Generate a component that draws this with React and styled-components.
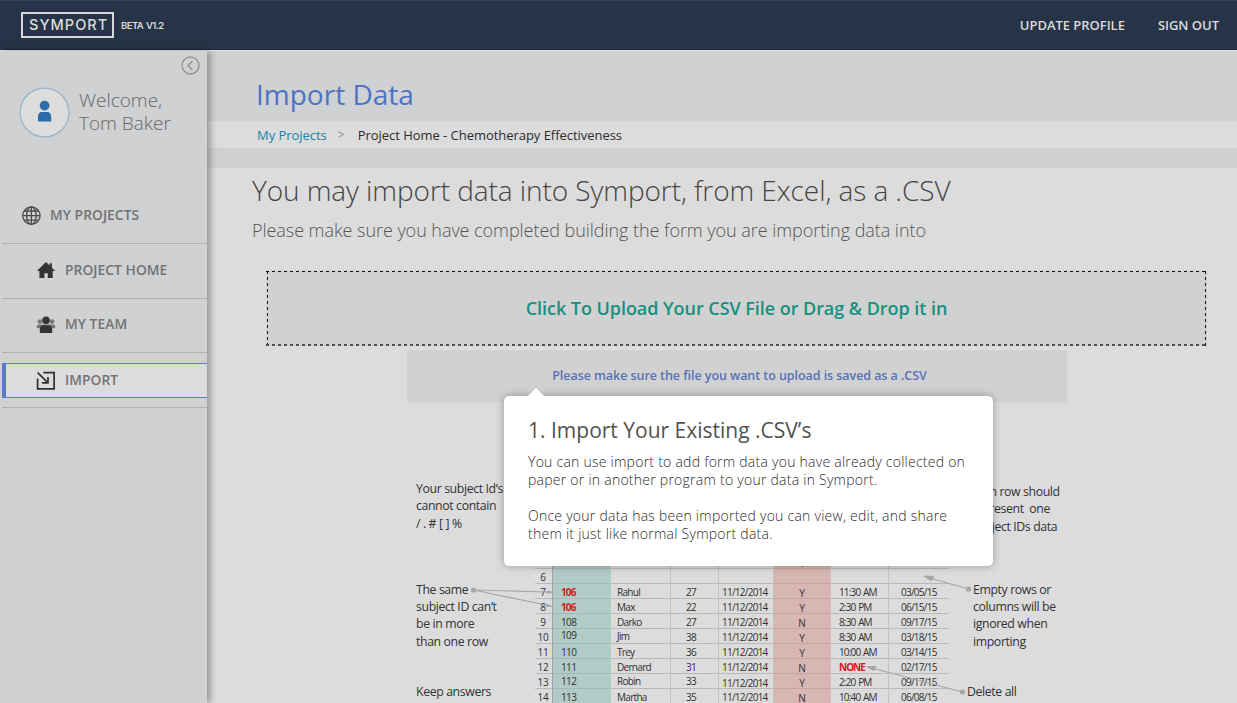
import React from "react";
import styled, { createGlobalStyle } from "styled-components";

const GlobalStyle = createGlobalStyle`
  * { box-sizing: border-box; }
  html, body { margin: 0; padding: 0; overflow: hidden; }
  body { font-family: "Open Sans", "Noto Sans", sans-serif; background: #dcdcdc; color: #3d3d3d; }
  h1, h2, h3, p { margin: 0; font-weight: 400; }
`;

const Page = styled.div`
  position: relative;
  display: flex;
  flex-direction: column;
  width: 1237px;
  height: 703px;
  overflow: hidden;
`;

const TopBar = styled.header`
  flex: none;
  display: flex;
  align-items: center;
  height: 51px;
  padding: 0 18px 2px 21px;
  background: #273447;
  border-top: 1px solid #354356;
  border-bottom: 1px solid #e4e6e7;
  box-shadow: inset 0 -1px 0 #1c2a3e;
  color: #dadbdc;
`;

const Logo = styled.div`
  width: 93px;
  height: 26px;
  border: 2px solid #d6d8da;
  line-height: 22px;
  padding-left: 6px;
  font-family: Inter, "Open Sans", sans-serif;
  font-size: 14.5px;
  font-weight: 500;
  letter-spacing: 1.05px;
  white-space: nowrap;
`;

const Version = styled.span`
  margin-left: 7px;
  padding-top: 1px;
  font-family: Inter, "Open Sans", sans-serif;
  font-size: 9.5px;
  font-weight: 600;
  letter-spacing: -0.55px;
  word-spacing: 1px;
`;

const TopLinks = styled.nav`
  margin-left: auto;
  display: flex;
  gap: 33px;
  font-size: 13px;
  font-weight: 600;
  letter-spacing: -0.03px;
`;

const Body = styled.div`
  flex: 1;
  display: flex;
  min-height: 0;
`;

const Sidebar = styled.aside`
  position: relative;
  z-index: 1;
  flex: none;
  width: 207px;
  background: #cfd1d2;
  box-shadow: 3px 0 7px rgba(0, 0, 0, 0.34);
`;

const CollapseRow = styled.div`
  display: flex;
  justify-content: flex-end;
  padding: 5px 7px 0 0;
  height: 36px;
`;

const Profile = styled.div`
  display: flex;
  align-items: center;
  height: 51px;
  padding-left: 19px;
  gap: 9px;
`;

const Welcome = styled.div`
  margin-top: -1px;
  font-size: 19px;
  font-weight: 300;
  line-height: 23px;
  color: #66686a;
`;

const Menu = styled.nav`
  margin: 51px 0 0 2px;
`;

const MenuItem = styled.div`
  display: flex;
  align-items: center;
  height: ${(p) => p.$h || 55}px;
  padding-left: ${(p) => (p.$nested ? 34 : 19)}px;
  padding-bottom: 4px;
  gap: 9px;
  border-bottom: 1px solid #aeb0b2;
  font-size: 13.8px;
  font-weight: 600;
  letter-spacing: 0.05px;
  color: #727374;
  svg { flex: none; margin-top: 2px; }
`;

const ActiveSlot = styled.div`
  height: 55px;
  padding: 10px 0;
  border-bottom: 1px solid #aeb0b2;
`;

const ActiveItem = styled(MenuItem)`
  height: 35px;
  padding: 0 0 2px 30px;
  background: #dcdcdc;
  border-top: 1px solid #5682d6;
  border-bottom: 1px solid #5682d6;
  border-left: 4px solid #5a7cc4;
`;

const Main = styled.main`
  flex: 1;
  min-width: 0;
  display: flex;
  flex-direction: column;
`;

const TitleBand = styled.div`
  flex: none;
  height: 70px;
  padding: 24px 0 0 49px;
  background: #cfd1d2;
`;

const PageTitle = styled.h1`
  font-size: 28px;
  line-height: 38px;
  font-weight: 400;
  color: #4d73c6;
`;

const Breadcrumb = styled.div`
  flex: none;
  display: flex;
  align-items: center;
  height: 27px;
  padding-left: 50px;
  background: #dcdcdc;
  font-size: 13px;
  letter-spacing: -0.04px;
  color: #2c2c2c;
`;

const Crumb = styled.a`
  color: #1484ad;
`;

const Separator = styled.span`
  width: 31px;
  padding-left: 11px;
  font-size: 12px;
  color: #909192;
`;

const Divider = styled.div`
  flex: none;
  height: 20px;
  background: #cfd1d2;
`;

const Content = styled.section`
  flex: 1;
  display: flex;
  flex-direction: column;
  padding: 3px 30px 0 45px;
  background: #dcdcdc;
`;

const Headline = styled.h2`
  font-size: 28px;
  line-height: 38px;
  font-weight: 300;
  letter-spacing: -0.08px;
  color: #454545;
`;

const Subline = styled.p`
  font-size: 18px;
  line-height: 24px;
  margin-top: 9px;
  font-weight: 300;
  letter-spacing: -0.05px;
  color: #565656;
`;

const DropZone = styled.div`
  flex: none;
  display: flex;
  align-items: center;
  justify-content: center;
  height: 76px;
  margin: 28px 0 0 14px;
  background:
    repeating-linear-gradient(90deg, #151515 0 3px, transparent 3px 6px) 0 1px / 100% 1px no-repeat,
    repeating-linear-gradient(90deg, #505050 0 3px, transparent 3px 6px) 0 100% / 100% 2px no-repeat,
    repeating-linear-gradient(180deg, #151515 0 3px, transparent 3px 6px) 1px 1px / 1px 100% no-repeat,
    repeating-linear-gradient(180deg, #151515 0 3px, transparent 3px 6px) calc(100% - 1px) 1px / 1px 100% no-repeat,
    #d1d1d1;
  font-size: 18px;
  font-weight: 600;
  letter-spacing: -0.05px;
  color: #159080;
`;

const Notice = styled.div`
  flex: none;
  align-self: flex-start;
  width: 660px;
  height: 52px;
  margin: 4px 0 0 155px;
  padding-left: 5px;
  line-height: 52px;
  text-align: center;
  background: #d1d1d2;
  font-size: 12.5px;
  font-weight: 650;
  letter-spacing: -0.06px;
  color: #5672b6;
  box-shadow: 0 1px 0 #d7d7da;
`;

const Guide = styled.div`
  position: relative;
  flex: none;
  display: flex;
  height: 301px;
  margin-left: 164px;
`;

const Notes = styled.div`
  flex: none;
  width: ${(p) => p.$w}px;
  font-size: 12.3px;
  line-height: 17.3px;
  letter-spacing: -0.38px;
  color: #333;
  white-space: pre;
`;

const Note = styled.p`
  margin-top: ${(p) => p.$gap}px;
  margin-left: ${(p) => p.$indent || 0}px;
`;

const Sheet = styled.div`
  flex: none;
  width: 414px;
  margin-right: 24px;
  padding-top: 152px;
`;

const SheetRow = styled.div`
  display: grid;
  grid-template-columns: 18px 58px 60px 48px 55px 57px 58px 60px;
  grid-template-rows: 15px;
  height: 15px;
  font-size: 10px;
  line-height: 17px;
  color: #303030;
`;

const tints = { teal: "#b2cbc7", pink: "#d8b6b3" };
const rules = { teal: "#a3b9b5", pink: "#c4a6a4" };

const Cell = styled.div`
  padding-left: ${(p) => p.$pad}px;
  letter-spacing: ${(p) => p.$track || 0}px;
  word-spacing: 1px;
  background: ${(p) => tints[p.$tint] || "transparent"};
  border-right: ${(p) => (p.$last ? "0" : "1px")} solid
    ${(p) => (p.$tint ? "transparent" : "#c2c2c2")};
  box-shadow: inset 0 -1px 0 ${(p) => rules[p.$tint] || "#b9b9b9"};
  font-weight: ${(p) => (p.$alert ? 700 : 400)};
  color: ${(p) => (p.$alert ? "#cf1b1b" : "inherit")};
  text-align: ${(p) => (p.$center ? "center" : "left")};
  white-space: nowrap;
`;

const RowNumber = styled(Cell)`
  padding-right: 1px;
  border-right-color: #9fa3a3;
`;

const Nudge = styled.span`
  display: inline-block;
  transform: translateY(${(p) => p.$y}px);
`;

const Arrows = styled.svg`
  position: absolute;
  left: 0;
  top: 0;
`;

const Popover = styled.div`
  position: absolute;
  z-index: 2;
  left: 504px;
  top: 396px;
  width: 489px;
  height: 170px;
  padding: 20px 24px;
  background: #fff;
  border-radius: 5px;
  box-shadow: 0 0 9px rgba(0, 0, 0, 0.3);
  color: #4a4a4a;
  &::before {
    content: "";
    position: absolute;
    left: 24px;
    top: -8px;
    border: solid transparent;
    border-width: 0 8px 8px;
    border-bottom-color: #fff;
  }
`;

const PopTitle = styled.h3`
  font-size: 21px;
  line-height: 29px;
  font-weight: 400;
  color: #525252;
`;

const PopText = styled.p`
  margin-top: ${(p) => p.$gap}px;
  font-size: 14px;
  line-height: 18px;
  font-weight: 300;
  letter-spacing: 0.25px;
  white-space: nowrap;
  color: #2c2c2c;
`;

const CollapseIcon = () => (
  <svg width="19" height="19" viewBox="0 0 19 19" fill="none" stroke="#929496" strokeWidth="1.4">
    <circle cx="9.5" cy="9.5" r="8.5" />
    <path d="M11.5 5 7 9.5l4.5 4.5" />
  </svg>
);

const Avatar = () => (
  <svg width="51" height="51" viewBox="0 0 51 51">
    <circle cx="25.5" cy="25.5" r="24.4" fill="#dddddd" stroke="#97b5c6" strokeWidth="1.3" />
    <circle cx="25.6" cy="18.6" r="4.9" fill="#2a6da9" />
    <path d="M19 34.5v-4.3q0-5.2 4-5.2h5.2q4 0 4 5.2v4.3z" fill="#2a6da9" />
  </svg>
);

const GlobeIcon = () => (
  <svg width="20" height="20" viewBox="0 0 20 20" fill="none" stroke="#47494a" strokeWidth="1.3">
    <circle cx="10.4" cy="10.6" r="8.7" />
    <ellipse cx="10.4" cy="10.6" rx="4.8" ry="8.7" />
    <path d="M10.4 1.9v17.4M1.7 10.6h17.4M3 6h14.8M3 15.2h14.8" />
  </svg>
);

const HomeIcon = () => (
  <svg width="20" height="20" viewBox="0 0 20 20" fill="#323436">
    <path d="M10 2 0.8 11h2.6v6.9h5v-4.6h3.4v4.6h4.9V11h2.6L15.9 7.7V3.2h-2.3v2.3z" />
  </svg>
);

const TeamIcon = () => (
  <svg width="20" height="20" viewBox="0 0 20 20">
    <g fill="#77797a">
      <circle cx="4" cy="6.6" r="2.4" />
      <circle cx="16" cy="6.6" r="2.4" />
      <path d="M0.8 13.2v-1.6q0-2 2-2h14.4q2 0 2 2v1.6z" />
    </g>
    <circle cx="10" cy="5.4" r="4.2" fill="#323436" stroke="#cfd1d2" strokeWidth="0.5" />
    <path d="M3.8 18v-3.4q0-4.4 4-4.4h4.4q4 0 4 4.4V18z" fill="#323436" />
  </svg>
);

const ImportIcon = () => (
  <svg width="20" height="20" viewBox="0 0 20 20" fill="none" stroke="#2f3133" strokeWidth="1.7">
    <path d="M7.3 1.6h10.8v16.2H1.6V7.4" />
    <path d="M1.6 1.6l10 9.8M12 5.9v6H6" />
  </svg>
);

// idY and dateY are small vertical nudges of the texts in that row.
const rows = [
  { n: "5", ans: "Y" },
  { n: "6" },
  { n: "7", id: "106", name: "Rahul", age: "27", date: "11/12/2014", ans: "Y", time: "11:30 AM", end: "03/05/15", dup: true },
  { n: "8", id: "106", name: "Max", age: "22", date: "11/12/2014", ans: "Y", time: "2:30 PM", end: "06/15/15", dup: true },
  { n: "9", id: "108", name: "Darko", age: "27", date: "11/12/2014", ans: "N", time: "8:30 AM", end: "09/17/15" },
  { n: "10", id: "109", name: "Jim", age: "38", date: "11/12/2014", ans: "Y", time: "8:30 AM", end: "03/18/15", idY: -2 },
  { n: "11", id: "110", name: "Trey", age: "36", date: "11/12/2014", ans: "Y", time: "10:00 AM", end: "03/14/15" },
  { n: "12", id: "111", name: "Dernard", age: "31", date: "11/12/2014", ans: "N", time: "NONE", end: "02/17/15" },
  { n: "13", id: "112", name: "Robin", age: "33", date: "11/12/2014", ans: "Y", time: "2:20 PM", end: "09/17/15", idY: -1, dateY: 1 },
  { n: "14", id: "113", name: "Martha", age: "35", date: "11/12/2014", ans: "N", time: "10:40 AM", end: "06/08/15" },
];

const DataRow = ({ r }) => (
  <SheetRow>
    <RowNumber $pad={0} $center $track={-0.3}>{r.n}</RowNumber>
    <Cell $pad={8} $tint="teal" $alert={r.dup} $track={r.dup ? -0.9 : -0.6}><Nudge $y={r.idY || 0}>{r.id}</Nudge></Cell>
    <Cell $pad={6} $track={-0.7}><Nudge $y={r.idY ? -1 : 0}>{r.name}</Nudge></Cell>
    <Cell $pad={15} $track={-0.6}><Nudge $y={r.dateY ? -1 : 0}>{r.age}</Nudge></Cell>
    <Cell $pad={3} $track={-0.75}><Nudge $y={r.dateY || 0}>{r.date}</Nudge></Cell>
    <Cell $pad={0} $tint="pink" $center><Nudge $y={0.5}>{r.ans}</Nudge></Cell>
    <Cell $pad={8} $track={r.time === "NONE" ? -1 : -0.85} $alert={r.time === "NONE"}>{r.time}</Cell>
    <Cell $pad={12} $track={-0.75} $last>{r.end}</Cell>
  </SheetRow>
);

export default function App() {
  return (
    <Page>
      <GlobalStyle />
      <TopBar>
        <Logo>SYMPORT</Logo>
        <Version>BETA V1.2</Version>
        <TopLinks>
          <span>UPDATE PROFILE</span>
          <span>SIGN OUT</span>
        </TopLinks>
      </TopBar>
      <Body>
        <Sidebar>
          <CollapseRow><CollapseIcon /></CollapseRow>
          <Profile>
            <Avatar />
            <Welcome>Welcome,<br />Tom Baker</Welcome>
          </Profile>
          <Menu>
            <MenuItem><GlobeIcon />MY PROJECTS</MenuItem>
            <MenuItem $nested><HomeIcon />PROJECT HOME</MenuItem>
            <MenuItem $nested $h={54}><TeamIcon />MY TEAM</MenuItem>
            <ActiveSlot>
              <ActiveItem $h={35}><ImportIcon />IMPORT</ActiveItem>
            </ActiveSlot>
          </Menu>
        </Sidebar>
        <Main>
          <TitleBand><PageTitle>Import Data</PageTitle></TitleBand>
          <Breadcrumb>
            <Crumb>My Projects</Crumb>
            <Separator>&gt;</Separator>
            <span>Project Home - Chemotherapy Effectiveness</span>
          </Breadcrumb>
          <Divider />
          <Content>
            <Headline>You may import data into Symport, from Excel, as a .CSV</Headline>
            <Subline>Please make sure you have completed building the form you are importing data into</Subline>
            <DropZone>Click To Upload Your CSV File or Drag &amp; Drop it in</DropZone>
            <Notice>Please make sure the file you want to upload is saved as a .CSV</Notice>
            <Guide>
              <Notes $w={119}>
                <Note $gap={78}>{"Your subject Id’s\ncannot contain\n/ . # [ ] %"}</Note>
                <Note $gap={49}>{"The same\nsubject ID can’t\nbe in more\nthan one row"}</Note>
                <Note $gap={33}>Keep answers</Note>
              </Notes>
              <Sheet>
                {rows.map((r) => <DataRow key={r.n} r={r} />)}
              </Sheet>
              <Notes $w={110}>
                <Note $gap={81} $indent={-2}>{"Each row should\nrepresent  one\nSubject IDs data"}</Note>
                <Note $gap={46}>{"Empty rows or\ncolumns will be\nignored when\nimporting"}</Note>
                <Note $gap={33} $indent={-6}>Delete all</Note>
              </Notes>
              <Arrows width="660" height="301" viewBox="416 402 660 301" fill="#a5a6a8" stroke="#a5a6a8" strokeWidth="1.2">
                <circle cx="473.5" cy="590" r="2" />
                <path d="M473.5 590 548 592M473.5 590 546 605" />
                <path d="M547 590.4l8 1.8-8 1.6zM546.5 603.5l7.5 3.2-8.3.3z" stroke="none" />
                <circle cx="968.5" cy="589" r="2" />
                <path d="M968.5 589 930 578" />
                <path d="M924 576l9.5.6-2.2 3.8z" />
                <circle cx="962.5" cy="692" r="2" />
                <path d="M962.5 692 872 668" />
                <path d="M867 666.5l8.5.2-1.6 3.8z" />
              </Arrows>
            </Guide>
          </Content>
        </Main>
      </Body>
      <Popover>
        <PopTitle>1. Import Your Existing .CSV’s</PopTitle>
        <PopText $gap={8}>
          You can use import to add form data you have already collected on<br />
          paper or in another program to your data in Symport.
        </PopText>
        <PopText $gap={18}>
          Once your data has been imported you can view, edit, and share<br />
          them it just like normal Symport data.
        </PopText>
      </Popover>
    </Page>
  );
}
